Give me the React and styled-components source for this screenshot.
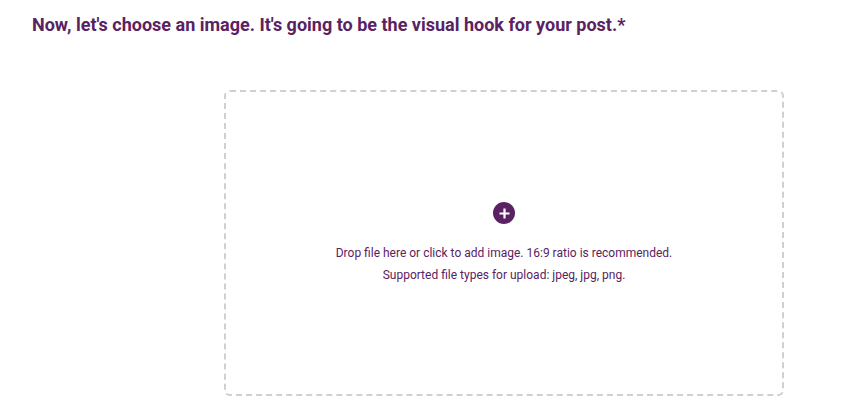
import React from "react";
import styled, { createGlobalStyle } from "styled-components";

const GlobalStyle = createGlobalStyle`
  * { box-sizing: border-box; }
  body {
    margin: 0;
    background: #fff;
    font-family: Roboto, "Liberation Sans", sans-serif;
  }
`;

const Page = styled.div`
  padding: 13px 32px 0;
`;

const Heading = styled.h2`
  margin: 0;
  font-size: 18px;
  line-height: 24px;
  font-weight: 700;
  color: #5a2262;
`;

const Row = styled.div`
  display: grid;
  grid-template-columns: 192px 560px;
  margin-top: 53px;
`;

const DropZone = styled.div`
  grid-column: 2;
  height: 306px;
  border: 2px dashed #d0d0d0;
  border-radius: 6px;
  display: flex;
  flex-direction: column;
  align-items: center;
  justify-content: center;
  padding-top: 2px;
  cursor: pointer;
`;

const AddIcon = styled.div`
  width: 22px;
  height: 22px;
  border-radius: 50%;
  background: #5a2262;
  display: flex;
  align-items: center;
  justify-content: center;
  margin-bottom: 18px;
`;

const Hint = styled.p`
  margin: 0;
  font-size: 12px;
  line-height: 22px;
  color: #5a2262;
  text-align: center;
`;

const App = () => (
  <>
    <GlobalStyle />
    <Page>
      <Heading>Now, let's choose an image. It's going to be the visual hook for your post.*</Heading>
      <Row>
        <DropZone>
          <AddIcon>
            <svg width="13" height="13" viewBox="0 0 13 13">
              <path d="M6.5 1.5v10M1.5 6.5h10" stroke="#fff" strokeWidth="2.2" />
            </svg>
          </AddIcon>
          <Hint>Drop file here or click to add image. 16:9 ratio is recommended.</Hint>
          <Hint>Supported file types for upload: jpeg, jpg, png.</Hint>
        </DropZone>
      </Row>
    </Page>
  </>
);

export default App;
